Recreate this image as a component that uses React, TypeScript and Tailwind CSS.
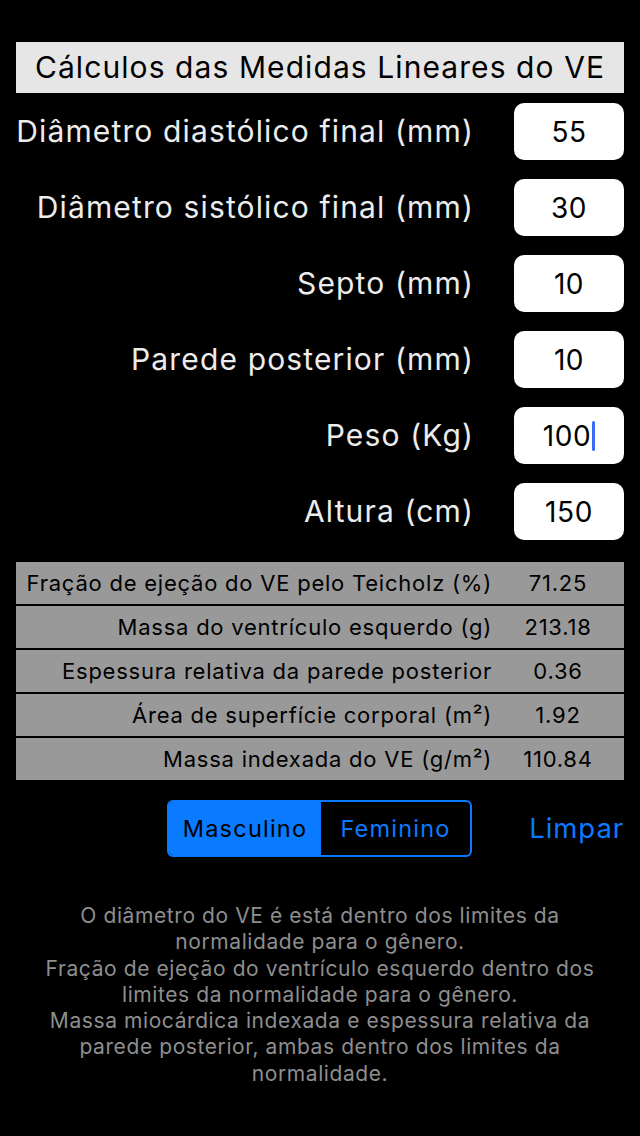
import React from 'react'

const fields = [
  { label: 'Diâmetro diastólico final (mm)', value: '55' },
  { label: 'Diâmetro sistólico final (mm)', value: '30' },
  { label: 'Septo (mm)', value: '10' },
  { label: 'Parede posterior (mm)', value: '10' },
  { label: 'Peso (Kg)', value: '100', focused: true },
  { label: 'Altura (cm)', value: '150' },
]

const results = [
  { label: 'Fração de ejeção do VE pelo Teicholz (%)', value: '71.25' },
  { label: 'Massa do ventrículo esquerdo (g)', value: '213.18' },
  { label: 'Espessura relativa da parede posterior', value: '0.36' },
  { label: 'Área de superfície corporal (m²)', value: '1.92' },
  { label: 'Massa indexada do VE (g/m²)', value: '110.84' },
]

const notes = [
  'O diâmetro do VE é está dentro dos limites da',
  'normalidade para o gênero.',
  'Fração de ejeção do ventrículo esquerdo dentro dos',
  'limites da normalidade para o gênero.',
  'Massa miocárdica indexada e espessura relativa da',
  'parede posterior, ambas dentro dos limites da',
  'normalidade.',
]

export default function App() {
  return (
    <div className="min-h-[1136px] w-[640px] bg-black px-4 pt-[42px] font-['Inter',sans-serif]">
      <div className="flex h-[51px] items-center justify-center whitespace-nowrap bg-[#e6e6e6] text-[30px] tracking-[0.036em] text-black">
        Cálculos das Medidas Lineares do VE
      </div>

      {/* inputs */}
      <div className="mt-[10px] flex flex-col gap-[19px]">
        {fields.map((f) => (
          <div key={f.label} className="flex items-center justify-end">
            <span className="mr-[40px] whitespace-nowrap text-right text-[30px] tracking-[0.038em] text-[#ececec]">{f.label}</span>
            <div className="flex h-[57px] w-[110px] shrink-0 items-center justify-center rounded-[10px] bg-white text-[28px] tracking-[0.02em] text-black">
              {f.value}
              {f.focused && <span className="ml-[1px] h-[30px] w-[3px] rounded-full bg-[#3a6cf4]" />}
            </div>
          </div>
        ))}
      </div>

      {/* results */}
      <div className="mt-[22px] flex flex-col gap-[2px]">
        {results.map((r) => (
          <div key={r.label} className="flex h-[42px] items-center whitespace-nowrap bg-[#999999] text-[22px] tracking-[0.035em] text-black">
            <span className="flex-1 text-right">{r.label}</span>
            <span className="w-[132px] shrink-0 text-center">{r.value}</span>
          </div>
        ))}
      </div>

      <div className="mt-[20px] flex items-center">
        <div className="ml-[151px] flex h-[57px] w-[305px] overflow-hidden rounded-[6px] border-2 border-[#0a7aff] text-[23.5px] tracking-[0.052em]">
          <div className="flex w-[152px] items-center justify-center bg-[#0a7aff] text-black">Masculino</div>
          <div className="flex flex-1 items-center justify-center text-[#0a7aff]">Feminino</div>
        </div>
        <span className="ml-auto text-[27.5px] tracking-[0.033em] text-[#0a7aff]">Limpar</span>
      </div>

      <div className="mt-[46px] flex flex-col items-center text-[21px] leading-[26.3px] tracking-[0.028em] text-[#8e8e8e]">
        {notes.map((n) => (
          <span key={n} className="whitespace-nowrap">{n}</span>
        ))}
      </div>
    </div>
  )
}
